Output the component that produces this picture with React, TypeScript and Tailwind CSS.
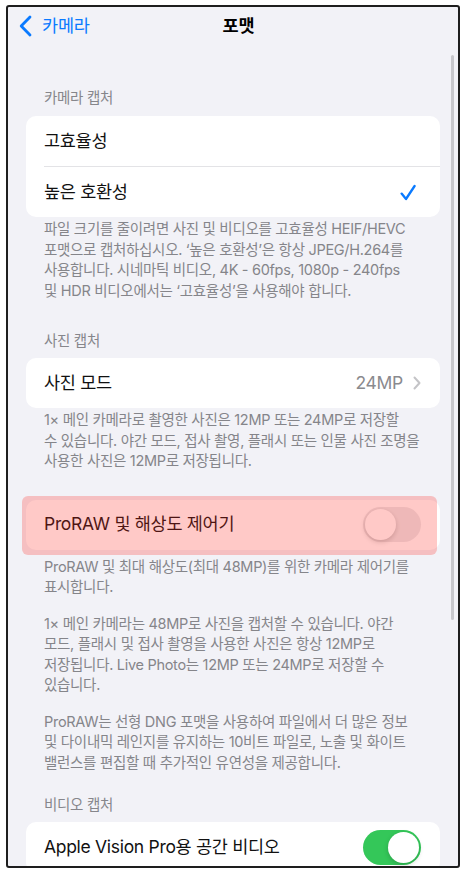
import clsx from 'clsx';

const Toggle = ({ on }: { on: boolean }) => (
  <div
    className={clsx(
      'w-[58px] h-[35px] rounded-full p-[2px] flex shrink-0',
      on ? 'bg-[#34c759] justify-end' : 'bg-[#e9e9eb] justify-start'
    )}
  >
    <div className="w-[31px] h-[31px] rounded-full bg-white shadow-[0_2px_5px_rgba(0,0,0,0.18)]" />
  </div>
);

const SectionTitle = ({ children, className }: { children: string; className?: string }) => (
  <p className={clsx('pl-[36px] text-[14.5px] leading-[20px] tracking-[-0.3px] text-[#86868b]', className)}>
    {children}
  </p>
);

const Footer = ({ children, className }: { children: React.ReactNode; className?: string }) => (
  <p
    className={clsx(
      'pl-[36px] pr-[10px] text-[14.5px] leading-[20.5px] tracking-[-0.3px] text-[#85858a] whitespace-nowrap',
      className
    )}
  >
    {children}
  </p>
);

const Check = () => (
  <svg width="16" height="17" viewBox="0 0 16 17" fill="none">
    <path d="M1.6 9.6 L6 15 L14.6 2" stroke="#0a7aff" strokeWidth="2.3" strokeLinecap="round" strokeLinejoin="round" />
  </svg>
);

const App = () => {
  return (
    <div className="w-[466px] h-[875px] bg-white pt-[5px] pl-[6px] font-[Inter,'Noto_Sans_CJK_KR',sans-serif]">
      <div className="relative w-[454px] h-[863px] border-2 border-[#1e1e1e] rounded-[3px] bg-[#f2f2f7] overflow-hidden">
        {/* nav bar */}
        <div className="h-[38px] flex items-center">
          <div className="flex-1 flex items-center pl-[11px] gap-[10px] text-[#0a7aff]">
            <svg width="13" height="22" viewBox="0 0 13 22" fill="none">
              <path d="M11 2 L2.2 11 L11 20" stroke="#0a7aff" strokeWidth="2.8" strokeLinecap="round" strokeLinejoin="round" />
            </svg>
            <span className="text-[17.5px] tracking-[-0.2px]">카메라</span>
          </div>
          <h1 className="text-[17.5px] font-bold tracking-[-0.2px] text-black">포맷</h1>
          <div className="flex-1" />
        </div>

        <SectionTitle className="mt-[43px]">카메라 캡처</SectionTitle>
        <div className="mx-[18px] mt-[8px] rounded-[10px] bg-white text-[17.5px] tracking-[-0.3px] text-[#111]">
          <div className="h-[50px] flex items-center pl-[18px]">
            <span>고효율성</span>
          </div>
          <div className="ml-[18px] h-px bg-[#e3e3e6]" />
          <div className="h-[50px] flex items-center justify-between pl-[18px] pr-[24px]">
            <span>높은 호환성</span>
            <Check />
          </div>
        </div>
        <Footer className="mt-[2px]">
          파일 크기를 줄이려면 사진 및 비디오를 고효율성 HEIF/HEVC
          <br />
          포맷으로 캡처하십시오. ‘높은 호환성’은 항상 JPEG/H.264를
          <br />
          사용합니다. 시네마틱 비디오, 4K - 60fps, 1080p - 240fps
          <br />및 HDR 비디오에서는 ‘고효율성’을 사용해야 합니다.
        </Footer>

        <SectionTitle className="mt-[30px]">사진 캡처</SectionTitle>
        <div className="mx-[18px] mt-[7px] rounded-[10px] bg-white text-[17.5px] tracking-[-0.3px]">
          <div className="h-[50px] flex items-center justify-between pl-[18px] pr-[19px]">
            <span className="text-[#111]">사진 모드</span>
            <div className="flex items-center gap-[10px]">
              <span className="text-[#8a8a8e]">24MP</span>
              <svg width="8" height="14" viewBox="0 0 8 14" fill="none">
                <path d="M1.5 1.5 L6.5 7 L1.5 12.5" stroke="#c4c4c7" strokeWidth="2" strokeLinecap="round" strokeLinejoin="round" />
              </svg>
            </div>
          </div>
        </div>
        <Footer className="mt-[2px]">
          1× 메인 카메라로 촬영한 사진은 12MP 또는 24MP로 저장할
          <br />수 있습니다. 야간 모드, 접사 촬영, 플래시 또는 인물 사진 조명을
          <br />
          사용한 사진은 12MP로 저장됩니다.
        </Footer>

        <div className="relative mx-[18px] mt-[28px] rounded-[10px] bg-white text-[17.5px] tracking-[-0.3px]">
          <div className="h-[50px] flex items-center justify-between pl-[18px] pr-[19px]">
            <span className="text-[#111]">ProRAW 및 해상도 제어기</span>
            <Toggle on={false} />
          </div>
          {/* highlight annotation */}
          <div className="absolute -left-[4px] right-[3px] -top-[4px] -bottom-[5px] rounded-[6px] bg-[rgba(255,40,30,0.25)]" />
        </div>
        <Footer className="mt-[7px]">
          <span className="block mb-[16px]">
            ProRAW 및 최대 해상도(최대 48MP)를 위한 카메라 제어기를
            <br />
            표시합니다.
          </span>
          <span className="block mb-[16px]">
            1× 메인 카메라는 48MP로 사진을 캡처할 수 있습니다. 야간
            <br />
            모드, 플래시 및 접사 촬영을 사용한 사진은 항상 12MP로
            <br />
            저장됩니다. Live Photo는 12MP 또는 24MP로 저장할 수
            <br />
            있습니다.
          </span>
          <span className="block">
            ProRAW는 선형 DNG 포맷을 사용하여 파일에서 더 많은 정보
            <br />및 다이내믹 레인지를 유지하는 10비트 파일로, 노출 및 화이트
            <br />
            밸런스를 편집할 때 추가적인 유연성을 제공합니다.
          </span>
        </Footer>

        <SectionTitle className="mt-[22px]">비디오 캡처</SectionTitle>
        <div className="mx-[18px] mt-[7px] rounded-[10px] bg-white text-[17.5px] tracking-[-0.3px]">
          <div className="h-[50px] flex items-center justify-between pl-[18px] pr-[19px]">
            <span className="text-[#111]">Apple Vision Pro용 공간 비디오</span>
            <Toggle on />
          </div>
        </div>

        {/* scroll indicator */}
        <div className="absolute right-[4px] top-[48px] w-[3px] h-[565px] rounded-full bg-[#c7c7cc]" />
      </div>
    </div>
  );
};

export default App;
